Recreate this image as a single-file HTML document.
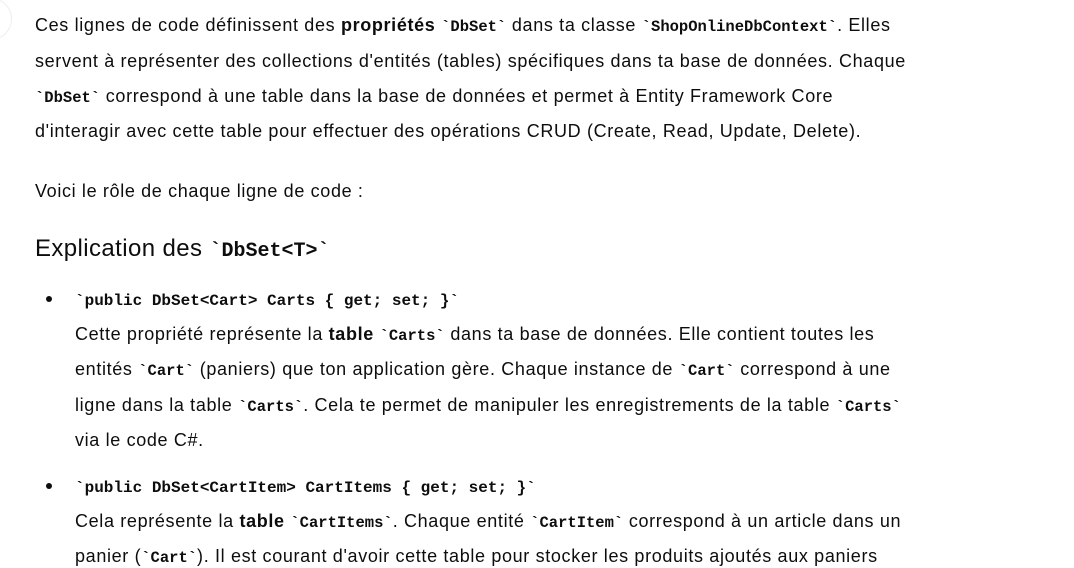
<!DOCTYPE html>
<html><head><meta charset="utf-8"><style>
body{margin:0;background:#fff;width:1074px;height:566px;overflow:hidden;position:relative;font-family:"Liberation Sans",sans-serif;color:#0d0d0d}
.l{position:absolute;white-space:nowrap;font-size:18px;line-height:20px;letter-spacing:0.65px}
code{font-family:"Liberation Mono",monospace;font-weight:bold;font-size:15.5px;letter-spacing:0}
.c{font-size:16px}
b{font-weight:bold}
.dot{position:absolute;width:6px;height:6px;border-radius:50%;background:#0d0d0d}
</style></head><body>
<div style="position:absolute;left:-30px;top:-2px;width:40px;height:40px;border:1px solid #eee;border-radius:50%"></div>
<div class="l" style="left:35px;top:15px">Ces lignes de code définissent des <b>propriétés <code>`DbSet`</code></b> dans ta classe <code>`ShopOnlineDbContext`</code>. Elles</div>
<div class="l" style="left:35px;top:51px">servent à représenter des collections d'entités (tables) spécifiques dans ta base de données. Chaque</div>
<div class="l" style="left:35px;top:86px"><code>`DbSet`</code> correspond à une table dans la base de données et permet à Entity Framework Core</div>
<div class="l" style="left:35px;top:121px">d'interagir avec cette table pour effectuer des opérations CRUD (Create, Read, Update, Delete).</div>
<div class="l" style="left:35px;top:181px">Voici le rôle de chaque ligne de code :</div>
<div class="l" style="left:35px;top:235px;font-size:24px;line-height:28px;letter-spacing:0.4px">Explication des <code style="font-size:20px">`DbSet&lt;T&gt;`</code></div>
<div class="dot" style="left:46px;top:296px"></div>
<div class="l" style="left:75px;top:289px"><code class="c">`public DbSet&lt;Cart&gt; Carts { get; set; }`</code></div>
<div class="l" style="left:75px;top:324px">Cette propriété représente la <b>table <code>`Carts`</code></b> dans ta base de données. Elle contient toutes les</div>
<div class="l" style="left:75px;top:359px">entités <code>`Cart`</code> (paniers) que ton application gère. Chaque instance de <code>`Cart`</code> correspond à une</div>
<div class="l" style="left:75px;top:395px">ligne dans la table <code>`Carts`</code>. Cela te permet de manipuler les enregistrements de la table <code>`Carts`</code></div>
<div class="l" style="left:75px;top:430px">via le code C#.</div>
<div class="dot" style="left:46px;top:483px"></div>
<div class="l" style="left:75px;top:476px"><code class="c">`public DbSet&lt;CartItem&gt; CartItems { get; set; }`</code></div>
<div class="l" style="left:75px;top:511px">Cela représente la <b>table <code>`CartItems`</code></b>. Chaque entité <code>`CartItem`</code> correspond à un article dans un</div>
<div class="l" style="left:75px;top:546px">panier (<code>`Cart`</code>). Il est courant d'avoir cette table pour stocker les produits ajoutés aux paniers</div>
</body></html>
